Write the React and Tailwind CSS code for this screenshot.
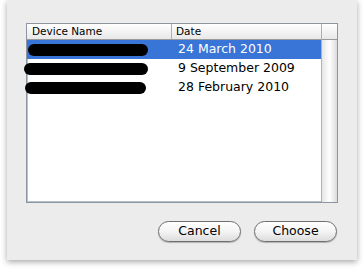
import React from 'react';

const rows = [
  { bar: 'ml-[1px] w-[120px]', date: '24 March 2010', selected: true },
  { bar: 'ml-[-3px] w-[124px]', date: '9 September 2009' },
  { bar: 'ml-[-2px] w-[121px]', date: '28 February 2010' },
];

function PillButton({ children }) {
  return (
    <button className="w-[83px] h-[21px] rounded-full border border-[#6e6e6e] bg-gradient-to-b from-white via-[#f4f4f4] to-[#dcdcdc] text-[12.5px] leading-none text-black shadow-[0_1px_1px_rgba(0,0,0,0.25)]">
      {children}
    </button>
  );
}

export default function App() {
  return (
    <div className="w-[364px] h-[272px] bg-white font-['DejaVu_Sans',sans-serif]">
      <div className="ml-[7px] w-[350px] h-[260px] bg-[#ececec] shadow-[0_2px_6px_rgba(0,0,0,0.35)] pt-[23px] pl-[19px]">
        {/* Device list */}
        <div className="w-[312px] h-[180px] border border-[#8c96a0] bg-white flex shadow-[inset_0_0_0_1px_#b9c1c8]">
          <div className="flex-1 flex flex-col">
            <div className="h-[16px] flex border-b border-[#9a9a9a] bg-gradient-to-b from-white to-[#e8e8e8] text-[10.5px] leading-[15px] text-black">
              <div className="w-[145px] pl-[5px] border-r border-[#b0b0b0]">Device Name</div>
              <div className="flex-1 pl-[4px]">Date</div>
            </div>
            <div>
              {rows.map((r) => (
                <div
                  key={r.date}
                  className={`h-[19px] flex items-center text-[12.5px] ${r.selected ? 'bg-[#3875d7] text-white' : 'text-black'}`}
                >
                  <div className="w-[146px]">
                    <div className={`h-[12px] rounded-full bg-black ${r.bar}`} />
                  </div>
                  <div className="flex-1 pl-[5px] whitespace-nowrap">{r.date}</div>
                </div>
              ))}
            </div>
          </div>
          {/* Empty scrollbar track */}
          <div className="w-[16px] flex flex-col border-l border-[#b0b0b0]">
            <div className="h-[16px] border-b border-[#9a9a9a] bg-gradient-to-b from-white to-[#e8e8e8]" />
            <div className="flex-1 bg-gradient-to-r from-[#e6e6e6] via-white to-[#dcdcdc]" />
          </div>
        </div>

        {/* Actions */}
        <div className="mt-[18px] pr-[20px] flex justify-end gap-[13px]">
          <PillButton>Cancel</PillButton>
          <PillButton>Choose</PillButton>
        </div>
      </div>
    </div>
  );
}
